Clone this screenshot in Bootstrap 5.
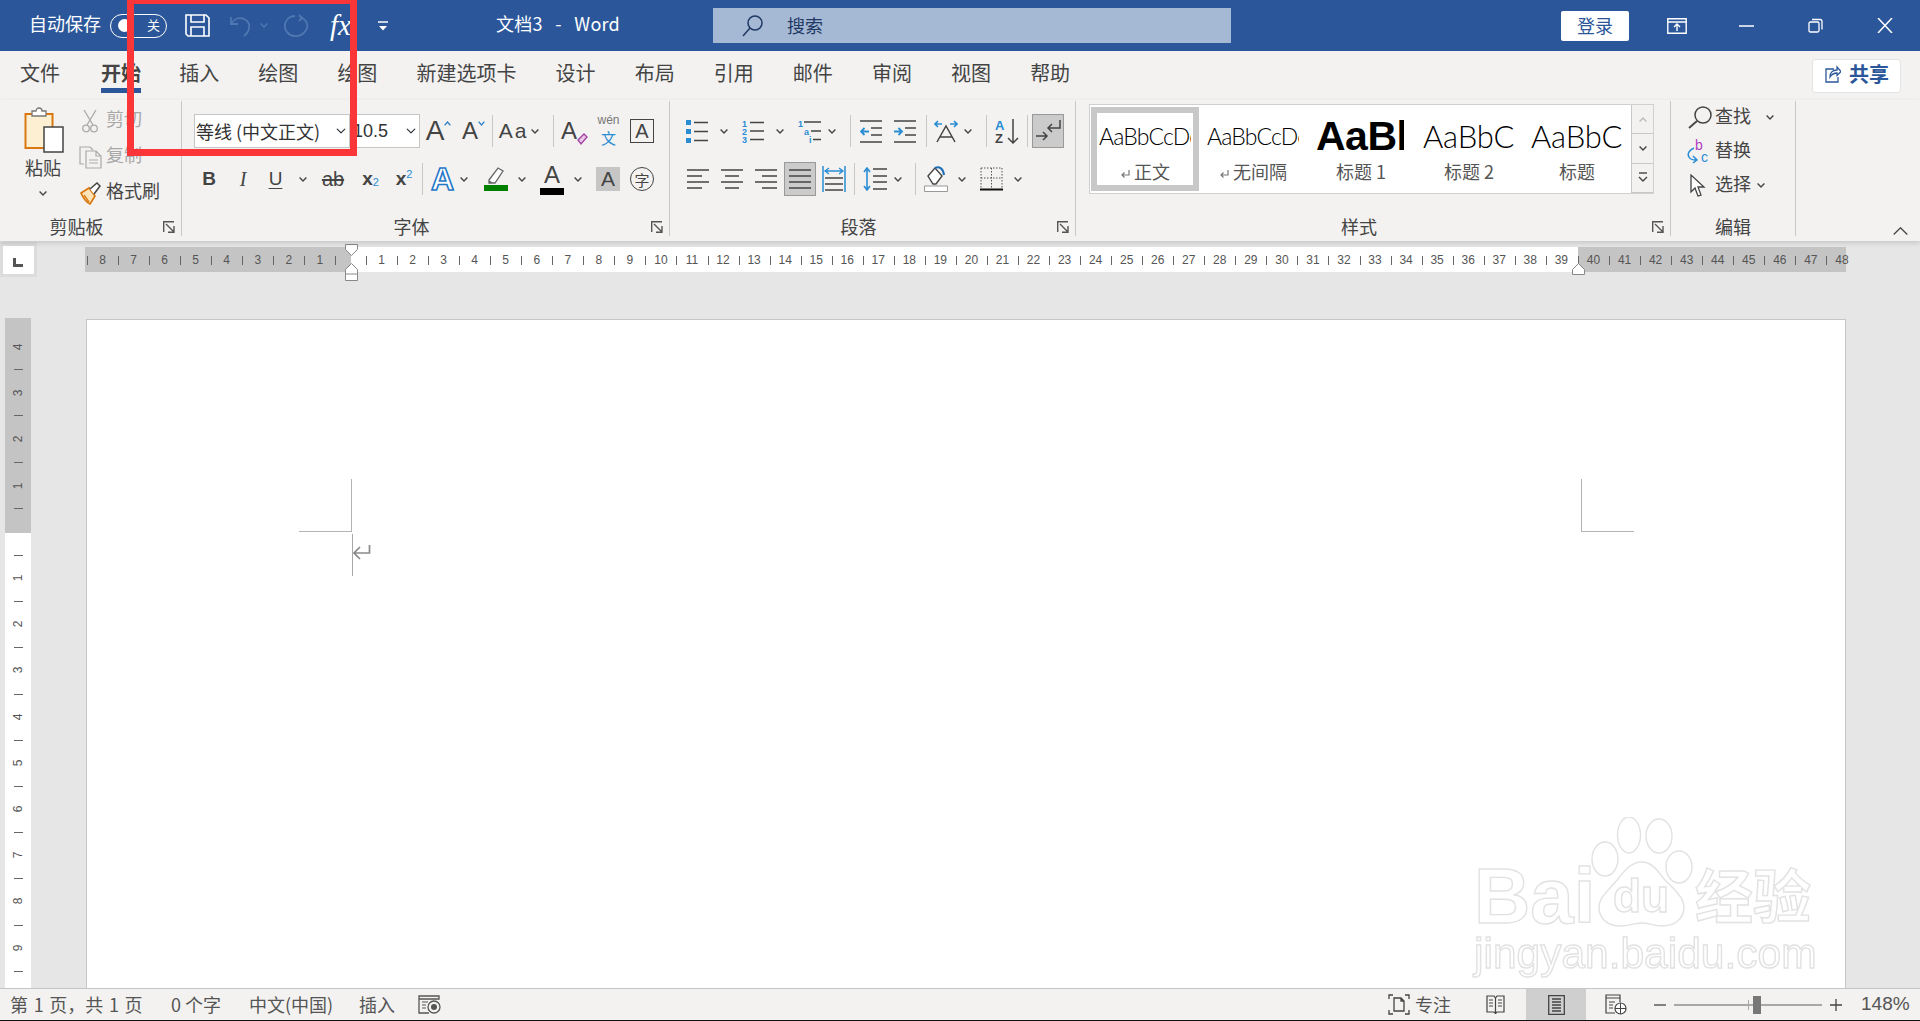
<!DOCTYPE html>
<html lang="zh-CN">
<head>
<meta charset="UTF-8">
<title>文档3 - Word</title>
<link href="https://cdn.jsdelivr.net/npm/bootstrap@5.3.3/dist/css/bootstrap.min.css" rel="stylesheet">
<style>
    html, body { width: 1920px; height: 1021px; overflow: hidden; }
    body { font-family: "Noto Sans CJK SC", "Liberation Sans", sans-serif; background: #e6e6e6; color: #444; font-size: 18px; line-height: 1.3; }
    svg { display: block; flex: none; }

    /* gaps used to space the ribbon items */
    .g3{margin-left:3px}.g4{margin-left:4px}.g5{margin-left:5px}.g6{margin-left:6px}.g7{margin-left:7px}.g8{margin-left:8px}.g9{margin-left:9px}
    .g10{margin-left:10px}.g11{margin-left:11px}.g12{margin-left:12px}.g13{margin-left:13px}.g14{margin-left:14px}.g15{margin-left:15px}.g16{margin-left:16px}
    .g17{margin-left:17px}.g18{margin-left:18px}.g19{margin-left:19px}.g21{margin-left:21px}.g23{margin-left:23px}.g26{margin-left:26px}
    .g27{margin-left:27px}.g35{margin-left:35px}.g38{margin-left:38px}.g52{margin-left:52px}.g54{margin-left:54px}.g95{margin-left:95px}.g108{margin-left:108px}.g330{margin-left:330px}

    .wd10{width:10px}.wd12{width:12px}.wd13{width:13px}.wd15{width:15px}.wd16{width:16px}.wd17{width:17px}.wd21{width:21px}.wd23{width:23px}.wd24{width:24px}.wd25{width:25px}.wd36{width:36px}

    /* title bar */
    .title-bar { height: 51px; background: #2b579a; color: #fff; flex: none; }
    .title-bar > * { flex: none; }
    .autosave { margin-left: 29px; margin-bottom: 4px; }
    .toggle-pill { width: 57px; height: 24px; border: 1.5px solid #fff; border-radius: 12px; padding-left: 7px; font-size: 13px; }
    .toggle-knob { width: 13px; height: 13px; background: #fff; border-radius: 50%; margin-right: 16px; }
    .fx-mark { width: 22px; font: italic 400 29px/1 "Liberation Serif", serif; }
    .doc-name { width: 122px; white-space: pre; font-size: 18px; margin-bottom: 4px; word-spacing: 2px; letter-spacing: .25px; }
    .search-box { width: 518px; height: 35px; background: #a5b9d4; color: #1f3864; padding-left: 29px; }
    .search-box span { margin-left: 24px; }
    .login-btn { width: 68px; height: 30px; padding: 0 0 2px; border-radius: 2px; border: 0; font-size: 18px; line-height: 28px; color: #2b579a; background: #fff; }

    /* tabs */
    .tab-row { height: 49px; background: #f3f2f1; padding-left: 20px; gap: 39.1px; font-size: 20px; flex: none; }
    .tab-item { height: 49px; padding-top: 9px; color: #444; }
    .tab-on { font-weight: 700; margin-left: 2px; margin-right: -1px; background: linear-gradient(#2b579a,#2b579a) 0 37px/100% 5px no-repeat; }
    .share-btn { margin-left: auto; margin-right: 19px; width: 89px; height: 34px; padding: 0 0 3px 12px; background: #fff; border: 1px solid #e4e4e4; border-radius: 3px; color: #2b579a; font-size: 20px; font-weight: 700; gap: 8px; }

    /* ribbon */
    .ribbon { height: 141px; background: #f3f2f1; flex: none; position: relative; z-index: 2; box-shadow: 0 2px 5px rgba(0,0,0,.14); }
    .rb-group { height: 135px; margin-top: 1px; border-right: 1px solid #c8c8c8; flex: none; }
    .rb-clip { width: 182px; } .rb-font { width: 488px; } .rb-para { width: 406px; } .rb-style { width: 595px; } .rb-edit { width: 125px; }
    .rb-body { height: 116px; }
    .rb-foot { height: 19px; line-height: 19px; font-size: 18px; }
    .launch { width: 28px; padding-left: 10px; }
    .rb-row { height: 34px; }
    .rb-row > * { flex: none; }
    .top13 { margin-top: 13px; } .top14 { margin-top: 14px; }
    .rb-sep { width: 1px; height: 32px; background: #c8c8c8; }
    .paste-col { width: 79px; padding: 6px 0 0 24px; }
    .paste-lbl { width: 38px; text-align: center; margin-top: 3px; }
    .paste-col svg:last-child { margin: 12px 0 0 15px; }
    .side-col { padding-top: 2px; }
    .side-row { height: 36px; }
    .side-row span { margin-bottom: 4px; }
    .side-ico { width: 27px; }
    .dim { color: #a8a8a8; }
    .combo { height: 34px; border-radius: 0; border: 1px solid #c6c6c6; background-color: #fff; background-size: 10px; background-position: right 3px center; padding: 0 0 0 1px; font-size: 18px; color: #333; box-shadow: none; }
    .combo-name { width: 156px; }
    .combo-size { width: 70px; border-left: 0; padding-left: 3px; font-family: "Liberation Sans", sans-serif; }
    .txt-ico { display: flex; align-items: center; justify-content: center; color: #444; font-family: "Liberation Sans", sans-serif; }
    .a-big { font-size: 28px; line-height: 1; }
    .a-small { font-size: 24px; line-height: 1; }
    .a-pair { font-size: 21px; letter-spacing: 2px; }
    .fmt-b { font-size: 19px; font-weight: 700; }
    .fmt-i { font: italic 20px "Liberation Serif", serif; }
    .fmt-u { font-size: 19px; text-decoration: underline; text-underline-offset: 3px; }
    .fmt-s { font-size: 20px; text-decoration: line-through; }
    .sub-blue { font-size: 11px; color: #2a8dd4; font-weight: 400; }
    .wen-col { line-height: 1; flex-direction: column; }
    .wen-top { font-size: 12px; color: #777; }
    .wen-bot { font: 15px "Noto Sans CJK SC", sans-serif; color: #2a8dd4; margin-top: 1px; }
    .box-a { height: 24px; border: 1.5px solid #444; font-size: 20px; }
    .glow-a { font-size: 32px; font-weight: 700; line-height: 1; color: #fff; -webkit-text-stroke: 1.6px #1f78c8; }
    .bar-a { flex-direction: column; font-size: 24px; line-height: 1; }
    .bar-a i { display: block; width: 24px; height: 7px; background: #000; margin-top: 1px; }
    .shade-a { height: 24px; background: #c6c6c6; font-size: 21px; }
    .ring-zi { height: 24px; border: 1.5px solid #444; border-radius: 50%; font: 15px/1 "Noto Sans CJK SC", sans-serif; }
    .on-btn { width: 32px; height: 34px; background: #cbcbcb; border: 1px solid #999; display: flex; align-items: center; justify-content: center; }

    /* style gallery */
    .gallery { width: 565px; height: 90px; margin-top: 3px; background: #fff; border: 1px solid #d0d0d0; padding: 2px 0 0 1px; position: relative; }
    .gal-item { width: 108px; height: 84px; flex: none; padding: 6px 6px 0; text-align: center; }
    .gal-on { outline: 6px solid #c8c8c8; outline-offset: -6px; }
    .gal-sample { width: 92px; height: 46px; line-height: 46px; overflow: hidden; white-space: nowrap; text-align: left; color: #000; font-family: Lato, "Liberation Sans", sans-serif; font-weight: 300; font-size: 23px; letter-spacing: -.85px; margin: 0 0 0 2px; }
    .gal-h1 { font: 700 41px/46px "Liberation Sans", sans-serif; margin-left: 3px; letter-spacing: -.5px; width: 88px; }
    .gal-h2 { font-size: 31px; letter-spacing: -.2px; }
    .gal-lbl { font-size: 18px; line-height: 24px; color: #555; white-space: nowrap; }
    .gal-lbl svg { display: inline-block; margin-right: 3px; }
    .gal-scroll { width: 22px; height: 88px; position: absolute; right: 0; top: 0; border-left: 1px solid #c8c8c8; background: #f3f2f1; }
    .gal-scroll div { height: 29.3px; border-bottom: 1px solid #c8c8c8; display: flex; align-items: center; justify-content: center; }
    .ed-body { margin-top: -1px; height: 117px; }
    .ed-body span { margin-bottom: 2px; }
    .collapse-up { margin: auto 0 6px 97px; }

    /* rulers and page */
    .work { height: 747px; flex: none; }
    .ruler-row { height: 77px; flex: none; }
    .corner { width: 37px; height: 35px; margin-top: 1px; background: #dcdcdc; padding: 4px 3px; flex: none; }
    .corner div { height: 28px; background: #fff; padding: 12px 0 0 10px; }
    .h-ruler { margin: 6px 0 0 48px; height: 25px; position: relative; color: #555; font: 12px/27px "Liberation Sans", sans-serif; }
    .h-ruler > div { height: 25px; flex: none; }
    .rl-gray { background: #c4c4c4; }
    .rl-white { background: #fff; }
    .rl-a { width: 266px; padding-left: 2px; } .rl-b { width: 1227px; padding-left: 15px; } .rl-c { width: 268px; }
    .rcell { width: 31.06px; flex: none; text-align: center; background: linear-gradient(#666,#666) 0 55%/1px 9px no-repeat; }
    .mark-l { left: 260px; top: -3px; } .mark-m { left: 260px; top: 16px; } .mark-r { left: 1487px; top: 16px; }
    .v-ruler { width: 26px; height: 670px; margin-left: 5px; flex: none; overflow: hidden; color: #555; font: 12px "Liberation Sans", sans-serif; }
    .v-a { height: 215px; padding-top: 6px; } .v-b { height: 455px; padding-top: 22px; }
    .vcell { height: 46.2px; display: flex; align-items: center; justify-content: center; }
    .vcell span { transform: rotate(-90deg); }
    .v-a .vcell { background: linear-gradient(#666,#666) 55% 100%/9px 1px no-repeat; }
    .v-b .vcell { background: linear-gradient(#666,#666) 55% 0/9px 1px no-repeat; }
    .page { width: 1760px; height: 669px; margin: 1px 0 0 55px; background: #fff; border: 1px solid #c6c6c6; border-bottom: 0; padding: 159px 0 0 212px; flex: none; }
    .crop-row { width: 1335px; }
    .crop-l, .crop-r { width: 53px; height: 53px; border-bottom: 1px solid #b4b4b4; }
    .crop-l { border-right: 1px solid #b4b4b4; } .crop-r { border-left: 1px solid #b4b4b4; }
    .caret-row { margin: 2px 0 0 53px; }
    .caret-line { width: 1px; height: 42px; background: #a8a8a8; margin-right: 0; }
    .caret-row svg { margin-bottom: 5px; }

    /* status bar */
    .status-bar { height: 33px; background: #f3f2f1; border-top: 1px solid #c6c6c6; border-bottom: 1px solid #111; font-size: 18px; color: #555; flex: none; }
    .status-bar > * { flex: none; }
    .st-a { width: 161px; margin-left: 10px; white-space: pre; word-spacing: 1.6px; } .st-b { width: 78px; } .st-c { width: 110px; } .st-d { width: 59px; }
    .st-right { margin-left: auto; width: 532px; height: 31px; }
    .st-right > * { flex: none; }
    .view-on { width: 60px; height: 31px; background: #cfcfcf; margin-left: 21px; }
    .zoom-track { width: 148px; height: 2px; background: #a8a8a8; margin-left: 8px; position: relative; }
    .zoom-tick { position: absolute; left: 74px; top: -4px; width: 1px; height: 10px; background: #a8a8a8; }
    .zoom-thumb { position: absolute; left: 79px; top: -8px; width: 8px; height: 18px; background: #777; }
    .zoom-txt { margin-left: 19px; font-family: "Liberation Sans", sans-serif; font-size: 19px; }

    /* overlays */
    .red-frame { left: 127px; top: 0; width: 230px; height: 156px; border: 7px solid #fb3639; border-top-width: 4px; z-index: 5; pointer-events: none; }
    .wm { left: 1474px; top: 817px; width: 345px; height: 166px; z-index: 4; color: #fff; -webkit-text-stroke: 1.4px #e2e2e2; filter: blur(.4px); }
    .wm-t { position: absolute; line-height: 1; white-space: nowrap; }
    .wm-bai { left: 0; top: 40px; font: 700 78px/1 "Liberation Sans", sans-serif; }
    .wm-du { left: 139px; top: 56px; font: 700 46px/1 "Liberation Sans", sans-serif; }
    .wm-jy { left: 221px; top: 47px; font: 700 58px/1 "Noto Sans CJK SC", sans-serif; }
    .wm-url { left: 0; top: 116px; font: 42.5px/1 "Liberation Sans", sans-serif; }
</style>
</head>
<body class="d-flex flex-column position-relative">

<svg class="d-none">
    <symbol id="chev" viewBox="0 0 8 5"><path d="M.6.6 4 4 7.4.6" fill="none" stroke="#444" stroke-width="1.4"/></symbol>
    <symbol id="launch" viewBox="0 0 12 12"><path d="M.7 11V.7H11M3 3l8 8M11 5v6.3H5" fill="none" stroke="#555" stroke-width="1.4"/></symbol>
    <symbol id="lines-c" viewBox="0 0 22 20"><path d="M0 1h22M4 7h14M0 13h22M4 19h14" stroke="#444" stroke-width="1.5"/></symbol>
    <symbol id="ret" viewBox="0 0 11 10"><path d="M9 1v5H2M4.500 3.500 2 6l2.500 2.500" fill="none" stroke="#777" stroke-width="1.200"/></symbol>
</svg>

<div class="title-bar d-flex align-items-center">
    <span class="autosave">自动保存</span>
    <div class="toggle-pill d-flex align-items-center g9"><span class="toggle-knob"></span><span>关</span></div>
    <svg class="g18" width="25" height="23" viewBox="0 0 25 23"><path d="M1 1h20l3 3v18H3l-2-2zM6 1v7h13V1M6 22v-9h13v9" fill="none" stroke="#fff" stroke-width="1.600"/></svg>
    <svg class="g19" width="23" height="22" viewBox="0 0 23 22"><path d="M2 2v7h7M2 9c3-5 8-7 13-5 7 3 7 11 0 17" fill="none" stroke="#4f78b2" stroke-width="1.800"/></svg>
    <svg class="g8" width="8" height="5"><path d="M.6.6 4 4 7.4.6" fill="none" stroke="#4f78b2" stroke-width="1.400"/></svg>
    <svg class="g16" width="25" height="24" viewBox="0 0 25 24"><path d="M17 3c5 3 7 7 6 11-2 6-8 9-13 8C4 21 0 16 1 10 2 5 6 2 11 2M15 1l3 3-3 3" fill="none" stroke="#4f78b2" stroke-width="1.800"/></svg>
    <span class="fx-mark g21">fx</span>
    <svg class="g26" width="10" height="10" viewBox="0 0 10 10"><path d="M0 1h10" stroke="#fff" stroke-width="1.500"/><path d="M1 5h8L5 9.500z" fill="#fff"/></svg>
    <span class="doc-name g108">文档3  -  Word</span>
    <div class="search-box d-flex align-items-center g95">
        <svg width="21" height="22" viewBox="0 0 21 22"><circle cx="13" cy="8" r="7" fill="none" stroke="#1f3864" stroke-width="1.500"/><path d="M8 13 1 21" stroke="#1f3864" stroke-width="1.500"/></svg>
        <span>搜索</span>
    </div>
    <button type="button" class="btn login-btn g330">登录</button>
    <svg class="g38" width="20" height="16" viewBox="0 0 20 16"><path d="M.8.8h18.400v14.400H.800zM1 4h18M10 13V6M7 9l3-3 3 3" fill="none" stroke="#fff" stroke-width="1.400"/></svg>
    <svg class="g52" width="15" height="2"><path d="M0 1h15" stroke="#fff" stroke-width="1.500"/></svg>
    <svg class="g54" width="15" height="15" viewBox="0 0 15 15"><path d="M1 5.500q0-1.500 1.500-1.500h7q1.500 0 1.500 1.500v7q0 1.500-1.500 1.500h-7Q1 14 1 12.500zM4 1.500h8q2 0 2 2v8" fill="none" stroke="#fff" stroke-width="1.300"/></svg>
    <svg class="g54" width="16" height="15" viewBox="0 0 16 15"><path d="m1 0 14 15M15 0 1 15" stroke="#fff" stroke-width="1.500"/></svg>
</div>

<div class="tab-row d-flex">
    <span class="tab-item">文件</span>
    <span class="tab-item tab-on">开始</span>
    <span class="tab-item">插入</span>
    <span class="tab-item">绘图</span>
    <span class="tab-item">绘图</span>
    <span class="tab-item">新建选项卡</span>
    <span class="tab-item">设计</span>
    <span class="tab-item">布局</span>
    <span class="tab-item">引用</span>
    <span class="tab-item">邮件</span>
    <span class="tab-item">审阅</span>
    <span class="tab-item">视图</span>
    <span class="tab-item">帮助</span>
    <button type="button" class="btn share-btn d-flex align-items-center align-self-center">
        <svg width="16" height="18" viewBox="0 0 16 18"><path d="M9 4H1v13h12v-5M5 12c0-5 3-7 7-7V2l4 4.500-4 4V8c-3 0-5 1-7 4z" fill="none" stroke="#2b579a" stroke-width="1.300"/></svg>
        共享
    </button>
</div>

<div class="ribbon d-flex">
    <!-- clipboard -->
    <div class="rb-group rb-clip d-flex flex-column">
        <div class="rb-body d-flex">
            <div class="paste-col">
                <svg class="g-paste" width="40" height="46" viewBox="0 0 40 46"><path d="M1.500 7h27v34h-27z" fill="#fdf0d2" stroke="#d9780f" stroke-width="2"/><path d="M8 9V4h4a3 3 0 0 1 6 0h4v5z" fill="#fff" stroke="#777" stroke-width="1.300"/><path d="M20 20h19v25H20z" fill="#fff" stroke="#444" stroke-width="1.500"/></svg>
                <div class="paste-lbl">粘贴</div>
                <svg width="8" height="5"><use href="#chev"/></svg>
            </div>
            <div class="side-col">
                <div class="side-row d-flex align-items-center dim">
                    <div class="side-ico"><svg class="g3" width="16" height="23" viewBox="0 0 16 23"><path d="M2 0l9 15M14 0 5 15" stroke="#aaa" stroke-width="1.300"/><circle cx="4" cy="18.500" r="3.300" fill="none" stroke="#aaa" stroke-width="1.300"/><circle cx="12" cy="18.500" r="3.300" fill="none" stroke="#aaa" stroke-width="1.300"/></svg></div>
                    <span>剪切</span>
                </div>
                <div class="side-row d-flex align-items-center dim">
                    <div class="side-ico"><svg width="23" height="23" viewBox="0 0 23 23"><path d="M5 18H1V1h10l3 3M7 5h10l5 5v12H7zM17 5v5h5M10 14h9M10 17h9" fill="none" stroke="#aaa" stroke-width="1.200"/></svg></div>
                    <span>复制</span>
                </div>
                <div class="side-row d-flex align-items-center">
                    <div class="side-ico"><svg width="22" height="23" viewBox="0 0 22 23"><path d="m2 11 8-5 6 8-5 8c-3-1-7-6-9-11z" fill="#fde3b8" stroke="#d9780f" stroke-width="1.700"/><path d="m11 7 7-6 3 3-6 8" fill="#fff" stroke="#444" stroke-width="1.500"/><path d="m5 13 5 7" stroke="#d9780f" stroke-width="1.300"/></svg></div>
                    <span>格式刷</span>
                </div>
            </div>
        </div>
        <div class="rb-foot d-flex"><span class="flex-grow-1 text-center">剪贴板</span><div class="launch"><svg width="12" height="12" class="mt-1"><use href="#launch"/></svg></div></div>
    </div>

    <!-- font -->
    <div class="rb-group rb-font d-flex flex-column">
        <div class="rb-body">
            <div class="rb-row d-flex align-items-center top13">
                <select class="form-select combo combo-name g12"><option>等线 (中文正文)</option></select>
                <select class="form-select combo combo-size"><option>10.5</option></select>
                <span class="txt-ico wd23 g7 a-big">A<svg width="7" height="5" class="mb-3"><path d="M.6 4.400 3.500 1l2.900 3.400" fill="none" stroke="#2a7fc4" stroke-width="1.300"/></svg></span>
                <span class="txt-ico wd21 g13 a-small">A<svg width="7" height="5" class="mb-3"><path d="M.6.6 3.500 4l2.900-3.400" fill="none" stroke="#2a7fc4" stroke-width="1.300"/></svg></span>
                <span class="rb-sep g8"></span>
                <span class="txt-ico wd23 g9 a-pair">Aa</span>
                <svg class="g6" width="8" height="5"><use href="#chev"/></svg>
                <span class="rb-sep g14"></span>
                <span class="txt-ico wd23 g9 a-small">A<svg width="11" height="13" viewBox="0 0 11 13" class="mt-3"><path d="m1 7 6-6 3 3-6 7z" fill="#e9c8ea" stroke="#a33ea1" stroke-width="1.300"/></svg></span>
                <span class="txt-ico wd21 g12 wen-col"><span class="wen-top">wén</span><span class="wen-bot">文</span></span>
                <span class="txt-ico wd24 g11 box-a">A</span>
            </div>
            <div class="rb-row d-flex align-items-center top14">
                <span class="txt-ico wd12 g21 fmt-b">B</span>
                <span class="txt-ico wd10 g23 fmt-i">I</span>
                <span class="txt-ico wd13 g21 fmt-u">U</span>
                <svg class="g17" width="8" height="5"><use href="#chev"/></svg>
                <span class="txt-ico wd24 g14 fmt-s">ab</span>
                <span class="txt-ico wd17 g17 fmt-b">x<sub class="sub-blue">2</sub></span>
                <span class="txt-ico wd16 g17 fmt-b">x<sup class="sub-blue">2</sup></span>
                <span class="rb-sep g10"></span>
                <span class="txt-ico wd25 g7 glow-a">A</span>
                <svg class="g5" width="8" height="5"><use href="#chev"/></svg>
                <svg class="g16" width="24" height="24" viewBox="0 0 24 24"><path d="m5 13 9-12 5 3-8 12H5z" fill="#fff" stroke="#666" stroke-width="1.300"/><path d="M5 13v3h4z" fill="#666"/><path d="M0 18h24v6H0z" fill="#008000"/></svg>
                <svg class="g10" width="8" height="5"><use href="#chev"/></svg>
                <span class="txt-ico wd24 g14 bar-a">A<i></i></span>
                <svg class="g10" width="8" height="5"><use href="#chev"/></svg>
                <span class="txt-ico wd24 g14 shade-a">A</span>
                <span class="txt-ico wd24 g10 ring-zi">字</span>
            </div>
        </div>
        <div class="rb-foot d-flex"><span class="flex-grow-1 text-center">字体</span><div class="launch"><svg width="12" height="12" class="mt-1"><use href="#launch"/></svg></div></div>
    </div>

    <!-- paragraph -->
    <div class="rb-group rb-para d-flex flex-column">
        <div class="rb-body">
            <div class="rb-row d-flex align-items-center top13">
                <svg class="g16" width="22" height="23" viewBox="0 0 22 23"><path fill="#2a8dd4" d="M0 0h5v5H0zM0 9h5v5H0zM0 18h5v5H0z"/><path stroke="#444" stroke-width="1.500" d="M8 2.500h14M8 11.500h14M8 20.500h14"/></svg>
                <svg class="g12" width="8" height="5"><use href="#chev"/></svg>
                <svg class="g14" width="22" height="25" viewBox="0 0 22 25"><g fill="#2a8dd4" font-family="Liberation Sans" font-size="9" font-weight="700"><text x="0" y="8">1</text><text x="0" y="16">2</text><text x="0" y="24">3</text></g><path stroke="#444" stroke-width="1.500" d="M8 3.500h14M8 12h14M8 20.500h14"/></svg>
                <svg class="g12" width="8" height="5"><use href="#chev"/></svg>
                <svg class="g14" width="23" height="25" viewBox="0 0 23 25"><g fill="#2a8dd4" font-family="Liberation Sans" font-size="9" font-weight="700"><text x="0" y="8">1</text><text x="6" y="16">a</text><text x="11" y="24">i</text></g><path stroke="#444" stroke-width="1.500" d="M6 3h17M13 12h10M15 20.500h8"/></svg>
                <svg class="g7" width="8" height="5"><use href="#chev"/></svg>
                <span class="rb-sep g14"></span>
                <svg class="g9" width="22" height="23" viewBox="0 0 22 23"><path stroke="#444" stroke-width="1.500" d="M0 1h22M11 8h11M11 15h11M0 22h22"/><path d="M9 11.500H1M4.500 8 1 11.500 4.500 15" fill="none" stroke="#2a8dd4" stroke-width="1.800"/></svg>
                <svg class="g12" width="22" height="23" viewBox="0 0 22 23"><path stroke="#444" stroke-width="1.500" d="M0 1h22M11 8h11M11 15h11M0 22h22"/><path d="M0 11.500h8M4.500 8 8 11.500 4.500 15" fill="none" stroke="#2a8dd4" stroke-width="1.800"/></svg>
                <span class="rb-sep g10"></span>
                <svg class="g7" width="24" height="23" viewBox="0 0 24 23"><path d="M8 4H1M4 1 1 4l3 3M16 4h7M20 1l3 3-3 3" fill="none" stroke="#2a8dd4" stroke-width="1.600"/><path d="m3 22 9-16 9 16M6 17h12" fill="none" stroke="#444" stroke-width="1.500"/></svg>
                <svg class="g6" width="8" height="5"><use href="#chev"/></svg>
                <span class="rb-sep g14"></span>
                <svg class="g8" width="25" height="29" viewBox="0 0 25 29"><text x="0" y="13" fill="#2a8dd4" font-family="Liberation Sans" font-size="13" font-weight="700">A</text><text x="0" y="26" fill="#444" font-family="Liberation Sans" font-size="13" font-weight="700">Z</text><path d="M18 2v24M13 21l5 5 5-5" fill="none" stroke="#444" stroke-width="1.500"/></svg>
                <span class="rb-sep g7"></span>
                <span class="on-btn g4"><svg width="26" height="24" viewBox="0 0 26 24"><path d="M25 1v8H13M17 5l-4 4 4 4M1 17h11M8 13l4 4-4 4" fill="none" stroke="#444" stroke-width="1.500"/></svg></span>
            </div>
            <div class="rb-row d-flex align-items-center top14">
                <svg class="g17" width="22" height="20" viewBox="0 0 22 20"><path d="M0 1h22M0 7h15M0 13h22M0 19h15" stroke="#444" stroke-width="1.500"/></svg>
                <svg class="g12" width="22" height="20"><use href="#lines-c"/></svg>
                <svg class="g12" width="22" height="20" viewBox="0 0 22 20"><path d="M0 1h22M7 7h15M0 13h22M7 19h15" stroke="#444" stroke-width="1.500"/></svg>
                <span class="on-btn g7"><svg width="22" height="20" viewBox="0 0 22 20"><path d="M0 1h22M0 7h22M0 13h22M0 19h22" stroke="#444" stroke-width="1.500"/></svg></span>
                <svg class="g6" width="24" height="26" viewBox="0 0 24 26"><path d="M1 0v26M23 0v26" stroke="#2a8dd4" stroke-width="1.500"/><path d="M3 5h18M7 2 3 5l4 3M17 2l4 3-4 3" fill="none" stroke="#2a8dd4" stroke-width="1.300"/><path d="M3 12h18M3 18h18M3 24h18" stroke="#444" stroke-width="1.500"/></svg>
                <span class="rb-sep g8"></span>
                <svg class="g8" width="24" height="24" viewBox="0 0 24 24"><path d="M4 1v22M1 5l3-4 3 4M1 19l3 4 3-4" fill="none" stroke="#2a8dd4" stroke-width="1.600"/><path d="M10 2h14M10 9h14M10 15h14M10 22h14" stroke="#444" stroke-width="1.500"/></svg>
                <svg class="g7" width="8" height="5"><use href="#chev"/></svg>
                <span class="rb-sep g13"></span>
                <svg class="g8" width="24" height="26" viewBox="0 0 24 26"><path d="m4 10 7-8 7 8-6 8H9z" fill="#fff" stroke="#444" stroke-width="1.400"/><path d="M11 2c4-2 8 0 9 7" fill="none" stroke="#1f6fb5" stroke-width="2.200"/><path d="M.5 20h23v5.500H.5z" fill="#fff" stroke="#999"/></svg>
                <svg class="g10" width="8" height="5"><use href="#chev"/></svg>
                <svg class="g14" width="23" height="24" viewBox="0 0 23 24"><path d="M1 1h21M1 1v20M22 1v20M11.500 1v20M1 11h21" fill="none" stroke="#555" stroke-dasharray="1.500 1.500"/><path d="M0 22.500h23" stroke="#111" stroke-width="2"/></svg>
                <svg class="g11" width="8" height="5"><use href="#chev"/></svg>
            </div>
        </div>
        <div class="rb-foot d-flex"><span class="flex-grow-1 text-center">段落</span><div class="launch"><svg width="12" height="12" class="mt-1"><use href="#launch"/></svg></div></div>
    </div>

    <!-- styles -->
    <div class="rb-group rb-style d-flex flex-column">
        <div class="rb-body">
            <div class="gallery d-flex g13">
                <div class="gal-item gal-on"><div class="gal-sample">AaBbCcDc</div><div class="gal-lbl"><svg width="11" height="10"><use href="#ret"/></svg>正文</div></div>
                <div class="gal-item"><div class="gal-sample">AaBbCcDc</div><div class="gal-lbl"><svg width="11" height="10"><use href="#ret"/></svg>无间隔</div></div>
                <div class="gal-item"><div class="gal-sample gal-h1">AaBl</div><div class="gal-lbl">标题 1</div></div>
                <div class="gal-item"><div class="gal-sample gal-h2">AaBbC</div><div class="gal-lbl">标题 2</div></div>
                <div class="gal-item"><div class="gal-sample gal-h2">AaBbC</div><div class="gal-lbl">标题</div></div>
                <div class="gal-scroll">
                    <div><svg width="8" height="5"><path d="M.6 4.400 4 1l3.400 3.400" fill="none" stroke="#bbb" stroke-width="1.400"/></svg></div>
                    <div><svg width="8" height="5"><use href="#chev"/></svg></div>
                    <div><svg width="10" height="11" viewBox="0 0 10 11"><path d="M1 1h8" stroke="#444" stroke-width="1.400"/><path d="M1 5l4 4 4-4" fill="none" stroke="#444" stroke-width="1.400"/></svg></div>
                </div>
            </div>
        </div>
        <div class="rb-foot d-flex"><span class="flex-grow-1 text-center">样式</span><div class="launch"><svg width="12" height="12" class="mt-1"><use href="#launch"/></svg></div></div>
    </div>

    <!-- editing -->
    <div class="rb-group rb-edit d-flex flex-column">
        <div class="rb-body ed-body">
            <div class="rb-row d-flex align-items-center">
                <svg class="g17" width="24" height="23" viewBox="0 0 24 23"><circle cx="15" cy="9" r="8" fill="none" stroke="#444" stroke-width="1.500"/><path d="M9 15 1 22" stroke="#444" stroke-width="1.800"/></svg>
                <span class="wd36 g3">查找</span>
                <svg class="g15" width="8" height="5"><use href="#chev"/></svg>
            </div>
            <div class="rb-row d-flex align-items-center">
                <svg class="g16" width="21" height="25" viewBox="0 0 21 25"><text x="8" y="11" fill="#b23dc3" font-family="Liberation Sans" font-size="14">b</text><text x="14" y="23" fill="#2a8dd4" font-family="Liberation Sans" font-size="14">c</text><path d="M7 9C2 11 0 15 2 18c1 2 3 3 7 3M6 17l4 4-4 3" fill="none" stroke="#2a8dd4" stroke-width="1.500"/></svg>
                <span class="wd36 g7">替换</span>
            </div>
            <div class="rb-row d-flex align-items-center">
                <svg class="g19" width="16" height="23" viewBox="0 0 16 23"><path d="M1 1v17l4-4 3 8 3-1-3-8h6z" fill="#fff" stroke="#444" stroke-width="1.300"/></svg>
                <span class="wd36 g9">选择</span>
                <svg class="g6" width="8" height="5"><use href="#chev"/></svg>
            </div>
        </div>
        <div class="rb-foot text-center">编辑</div>
    </div>

    <svg class="collapse-up" width="15" height="8" viewBox="0 0 15 8"><path d="M.7 7.500 7.500.8l6.800 6.700" fill="none" stroke="#444" stroke-width="1.300"/></svg>
</div>

<div class="work">
    <div class="ruler-row d-flex">
        <div class="corner"><div><svg width="10" height="9" viewBox="0 0 10 9"><path d="M0 0h3v6h7v3H0z" fill="#555"/></svg></div></div>
        <div class="h-ruler d-flex">
            <div class="rl-gray rl-a d-flex" id="hrA"></div>
            <div class="rl-white rl-b d-flex" id="hrB"></div>
            <div class="rl-gray rl-c d-flex" id="hrC"></div>
            <svg class="position-absolute mark-l" width="13" height="12" viewBox="0 0 13 12"><path d="M.5.500h12v5L6.500 11.500.5 5.500z" fill="#fff" stroke="#888"/></svg>
            <svg class="position-absolute mark-m" width="13" height="18" viewBox="0 0 13 18"><path d="M.5 6.500l6-6 6 6v11H.5zM.5 11h12" fill="#fff" stroke="#888"/></svg>
            <svg class="position-absolute mark-r" width="13" height="12" viewBox="0 0 13 12"><path d="M.5 6.500l6-6 6 6v5H.5z" fill="#fff" stroke="#888"/></svg>
        </div>
    </div>
    <div class="d-flex">
        <div class="v-ruler">
            <div class="rl-gray v-a" id="vrA"></div>
            <div class="rl-white v-b" id="vrB"></div>
        </div>
        <div class="page">
            <div class="crop-row d-flex justify-content-between">
                <div class="crop-l"></div>
                <div class="crop-r"></div>
            </div>
            <div class="caret-row d-flex align-items-center">
                <div class="caret-line"></div>
                <svg width="18" height="16" viewBox="0 0 18 16"><path d="M16.500 0v8H1M7 2 1 8l6 6" fill="none" stroke="#8a8a8a" stroke-width="1.700"/></svg>
            </div>
        </div>
    </div>
</div>

<div class="status-bar d-flex align-items-center">
    <span class="st-a">第 1 页，共 1 页</span>
    <span class="st-b">0 个字</span>
    <span class="st-c">中文(中国)</span>
    <span class="st-d">插入</span>
    <svg width="23" height="19" viewBox="0 0 23 19"><path d="M1 1h20v3H1zM1 4v14h10" fill="none" stroke="#555" stroke-width="1.300"/><path d="M4 7h6M4 10h4M4 13h4" stroke="#555"/><circle cx="16" cy="12" r="6" fill="none" stroke="#555" stroke-width="1.300"/><circle cx="16" cy="12" r="3" fill="#555"/></svg>
    <div class="st-right d-flex align-items-center">
        <svg width="22" height="21" viewBox="0 0 22 21"><path d="M1 5V1h4M17 1h4v4M21 16v4h-4M5 20H1v-4" fill="none" stroke="#444" stroke-width="1.300"/><path d="M6 4h7l3 3v10H6zM13 4v3h3" fill="none" stroke="#444" stroke-width="1.300"/></svg>
        <span class="g5">专注</span>
        <svg class="g35" width="19" height="19" viewBox="0 0 19 19"><path d="M1 1h7l1.500 2L11 1h7v16h-7l-1.500 1.500L8 17H1zM9.500 3v15M3 5h4M3 8h4M3 11h4M12 5h4M12 8h4M12 11h4" fill="none" stroke="#444" stroke-width="1.200"/></svg>
        <div class="view-on d-flex align-items-center justify-content-center"><svg width="17" height="20" viewBox="0 0 17 20"><path d="M.7.7h15.600v18.600H.700zM4 4h9M4 7h9M4 10h9M4 13h9M4 16h9" fill="none" stroke="#444" stroke-width="1.300"/></svg></div>
        <svg class="g19" width="22" height="21" viewBox="0 0 22 21"><path d="M10 19H1V1h14v7M1 4h14M4 8h6M4 11h4M4 14h4" fill="none" stroke="#444" stroke-width="1.200"/><circle cx="15.500" cy="14.500" r="5.500" fill="#fff" stroke="#444" stroke-width="1.200"/><path d="M10 14.500h11M15.500 9v11" stroke="#444"/></svg>
        <svg class="g27" width="12" height="2"><path d="M0 1h12" stroke="#444" stroke-width="1.300"/></svg>
        <div class="zoom-track"><span class="zoom-tick"></span><span class="zoom-thumb"></span></div>
        <svg class="g8" width="12" height="12"><path d="M0 6h12M6 0v12" stroke="#444" stroke-width="1.300"/></svg>
        <span class="zoom-txt">148%</span>
    </div>
</div>

<div class="red-frame position-absolute"></div>

<div class="wm position-absolute">
    <svg class="position-absolute top-0 start-0" width="345" height="120" viewBox="0 0 345 120">
        <g fill="none" stroke="#e2e2e2" stroke-width="1.400">
            <ellipse cx="131" cy="42" rx="13" ry="17"/>
            <ellipse cx="155" cy="18" rx="11.500" ry="18"/>
            <ellipse cx="185" cy="19" rx="13" ry="17"/>
            <ellipse cx="205" cy="50" rx="13" ry="16"/>
            <path d="M168 45c10 0 16 9 22 17 8 8 20 18 20 28 0 14-12 19-22 19-8 0-13-3-20-3s-13 3-22 3c-11 0-21-6-21-19 0-10 10-17 19-28 6-8 13-17 24-17z"/>
        </g>
    </svg>
    <span class="wm-t wm-bai">Bai</span>
    <span class="wm-t wm-du">du</span>
    <span class="wm-t wm-jy">经验</span>
    <span class="wm-t wm-url">jingyan.baidu.com</span>
</div>

<script src="https://cdn.jsdelivr.net/npm/bootstrap@5.3.3/dist/js/bootstrap.bundle.min.js"></script>
<script>
    // ruler numbers
    function hCells(id, nums) {
        document.getElementById(id).innerHTML = nums.map(n => `<span class="rcell">${n}</span>`).join("");
    }
    function vCells(id, nums) {
        document.getElementById(id).innerHTML = nums.map(n => `<div class="vcell"><span>${n}</span></div>`).join("");
    }
    const range = (a, b) => Array.from({ length: b - a + 1 }, (_, i) => a + i);
    hCells("hrA", [8, 7, 6, 5, 4, 3, 2, 1, ""]);
    hCells("hrB", range(1, 39));
    hCells("hrC", range(40, 48));
    vCells("vrA", [4, 3, 2, 1]);
    vCells("vrB", [...range(1, 9), ""]);
</script>
</body>
</html>
